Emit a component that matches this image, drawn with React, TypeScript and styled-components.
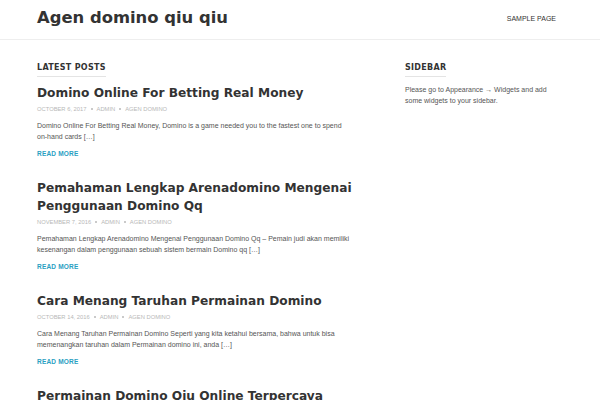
import React from "react";
import styled, { createGlobalStyle } from "styled-components";

const Global = createGlobalStyle`
  html, body { margin: 0; padding: 0; background: #fff; }
  body { font-family: "Liberation Sans", Arial, sans-serif; color: #444; overflow: hidden; height: 400px; }
  * { box-sizing: border-box; }
`;

const Header = styled.header`
  height: 40px;
  border-bottom: 1px solid #eeeeee;
  display: flex;
  align-items: center;
  justify-content: space-between;
  padding: 0 44px 0 37px;
`;

const SiteTitle = styled.h1`
  margin: -2px 0 0;
  font-family: "DejaVu Sans", sans-serif;
  font-weight: bold;
  font-size: 16.4px;
  color: #333;
  line-height: 1;
`;

const NavLink = styled.a`
  font-size: 7px;
  color: #333;
  text-transform: uppercase;
  text-decoration: none;
  margin-top: -2px;
`;

const Body = styled.div`
  display: flex;
  padding: 23px 0 0 37px;
`;

const Main = styled.main`
  width: 320px;
  margin-right: 48px;
`;

const Side = styled.aside`
  width: 160px;
`;

const SectionTitle = styled.h2`
  margin: 0 0 7px;
  display: block;
  width: fit-content;
  font-family: "DejaVu Sans", sans-serif;
  font-weight: bold;
  font-size: 8px;
  color: #333;
  letter-spacing: 0.3px;
  padding-bottom: 3px;
  border-bottom: 1px solid #e4e4e4;
  line-height: 10px;
`;

const Post = styled.article`
  margin-bottom: 22px;
`;

const PostTitle = styled.h3`
  margin: 0;
  font-family: "DejaVu Sans", sans-serif;
  font-weight: bold;
  font-size: 12.2px;
  line-height: 18px;
  color: #333;
`;

const Meta = styled.div`
  margin-top: 3px;
  display: flex;
  align-items: center;
  gap: 4px;
  font-size: 5.8px;
  color: #b8b8b8;
  text-transform: uppercase;
  line-height: 8px;
`;

const Dot = styled.span`
  width: 2px;
  height: 2px;
  border-radius: 50%;
  background: #b8b8b8;
`;

const Excerpt = styled.p`
  margin: 7px 0 0;
  font-size: 7px;
  line-height: 11px;
  color: #555;
`;

const ReadMore = styled.a`
  display: block;
  margin-top: 8px;
  font-size: 6.5px;
  font-weight: bold;
  color: #2aa0c2;
  text-transform: uppercase;
  text-decoration: none;
  letter-spacing: 0.2px;
`;

const SideText = styled.p`
  margin: 0;
  font-size: 7px;
  line-height: 11px;
  color: #555;
`;

const posts = [
  {
    title: "Domino Online For Betting Real Money",
    date: "October 6, 2017",
    excerpt:
      "Domino Online For Betting Real Money, Domino is a game needed you to the fastest one to spend on\u2011hand cards […]",
  },
  {
    title: "Pemahaman Lengkap Arenadomino Mengenai Penggunaan Domino Qq",
    date: "November 7, 2016",
    excerpt:
      "Pemahaman Lengkap Arenadomino Mengenai Penggunaan Domino Qq – Pemain judi akan memiliki kesenangan dalam penggunaan sebuah sistem bermain Domino qq […]",
  },
  {
    title: "Cara Menang Taruhan Permainan Domino",
    date: "October 14, 2016",
    excerpt:
      "Cara Menang Taruhan Permainan Domino Seperti yang kita ketahui bersama, bahwa untuk bisa memenangkan taruhan dalam Permainan domino ini, anda […]",
  },
  {
    title: "Permainan Domino Qiu Online Terpercaya",
    date: "October 1, 2016",
    excerpt: "Permainan Domino Qiu Online Terpercaya […]",
  },
];

export default function App() {
  return (
    <>
      <Global />
      <Header>
        <SiteTitle>Agen domino qiu qiu</SiteTitle>
        <NavLink href="#">Sample Page</NavLink>
      </Header>
      <Body>
        <Main>
          <SectionTitle>LATEST POSTS</SectionTitle>
          {posts.map((p) => (
            <Post key={p.title}>
              <PostTitle>{p.title}</PostTitle>
              <Meta>
                <span>{p.date}</span>
                <Dot />
                <span>Admin</span>
                <Dot />
                <span>Agen Domino</span>
              </Meta>
              <Excerpt>{p.excerpt}</Excerpt>
              <ReadMore href="#">Read More</ReadMore>
            </Post>
          ))}
        </Main>
        <Side>
          <SectionTitle>SIDEBAR</SectionTitle>
          <SideText>
            Please go to Appearance → Widgets and add some widgets to your sidebar.
          </SideText>
        </Side>
      </Body>
    </>
  );
}
